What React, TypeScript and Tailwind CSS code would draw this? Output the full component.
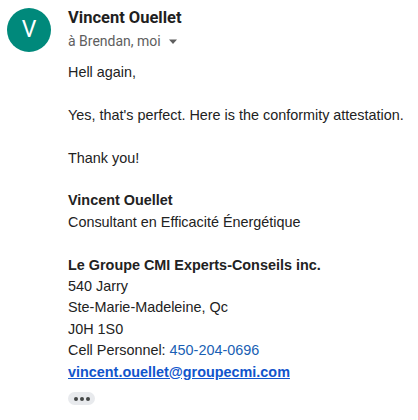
const Avatar = () => (
  <div className="flex h-[44px] w-[44px] shrink-0 items-center justify-center rounded-full bg-[#00897b] text-[23px] text-white font-['Roboto',sans-serif]">
    V
  </div>
);

export default function App() {
  return (
    <div className="h-[420px] w-[418px] overflow-hidden bg-white">
      <div className="flex gap-[17px] pl-[7px] pt-[8px]">
        <Avatar />
        <div className="flex flex-col">
          <div className="pt-[1px] text-[16.5px] font-bold leading-[18px] text-[#1f1f1f] font-['Roboto',sans-serif]">
            Vincent Ouellet
          </div>
          <div className="mt-[6px] flex items-center gap-[7px] text-[14px] leading-[16px] text-[#5e5e5e] font-['Roboto',sans-serif]">
            à Brendan, moi
            <svg width="10" height="6" viewBox="0 0 10 6" className="mt-[1px]">
              <path d="M1 0.5 L5 5 L9 0.5 Z" fill="#5e5e5e" />
            </svg>
          </div>
          <div className="mt-[13px] text-[14.4px] leading-[21.4px] text-[#222222] font-['Liberation_Sans',Arial,sans-serif]">
            <div>Hell again,</div>
            <br />
            <div>Yes, that's perfect. Here is the conformity attestation.</div>
            <br />
            <div>Thank you!</div>
            <br />
            <div className="font-bold">Vincent Ouellet</div>
            <div>Consultant en Efficacité Énergétique</div>
            <br />
            <div className="font-bold">Le Groupe CMI Experts-Conseils inc.</div>
            <div>540 Jarry</div>
            <div>Ste-Marie-Madeleine, Qc</div>
            <div>J0H 1S0</div>
            <div>
              Cell Personnel: <span className="text-[#1a5fb4]">450-204-0696</span>
            </div>
            <div>
              <a href="#" className="font-bold text-[#1155cc] underline">
                vincent.ouellet@groupecmi.com
              </a>
            </div>
          </div>
          <div className="mt-[9px] flex h-[13px] w-[27px] items-center justify-center gap-[2px] rounded-full bg-[#e8eaed]">
            <span className="h-[4px] w-[4px] rounded-full bg-[#444746]" />
            <span className="h-[4px] w-[4px] rounded-full bg-[#444746]" />
            <span className="h-[4px] w-[4px] rounded-full bg-[#444746]" />
          </div>
        </div>
      </div>
    </div>
  );
}
